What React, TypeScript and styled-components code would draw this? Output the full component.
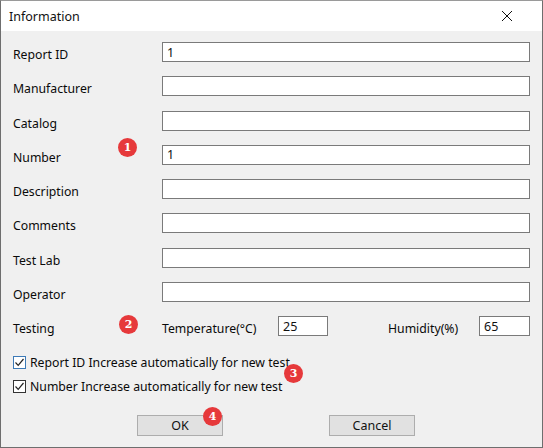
import React from "react";
import styled, { createGlobalStyle } from "styled-components";

const GlobalStyle = createGlobalStyle`
  html, body {
    margin: 0;
    padding: 0;
    background: #f0f0f0;
  }
  * {
    box-sizing: border-box;
  }
`;

const Window = styled.div`
  width: 543px;
  height: 448px;
  border: 1px solid #6e6e6e;
  border-top-color: #9a9a9a;
  background: #f0f0f0;
  display: flex;
  flex-direction: column;
  font-family: "Noto Sans", "Liberation Sans", sans-serif;
  font-size: 12.25px;
  color: #0a0a0a;
`;

const TitleBar = styled.div`
  height: 30px;
  flex-shrink: 0;
  background: #fff;
  display: flex;
  align-items: center;
  justify-content: space-between;
  padding: 0 29px 0 8px;
`;

const Title = styled.span`
  font-size: 12.5px;
  color: #111;
`;

const CloseButton = styled.button`
  width: 12px;
  height: 12px;
  padding: 0;
  border: none;
  background: none;
  display: flex;
  align-items: center;
  justify-content: center;
`;

const Body = styled.div`
  position: relative;
  flex: 1;
  padding: 11px 12px 0 12px;
`;

const FormGrid = styled.div`
  display: grid;
  grid-template-columns: 149px 368px;
  row-gap: 14.3px;
  align-items: center;
`;

/* captions sit a few pixels below the centre line of their boxes */
const Label = styled.label`
  margin-top: 5px;
  line-height: 15px;
  white-space: nowrap;
`;

const TextBox = styled.input<{ $w?: number }>`
  width: ${(p) => (p.$w ? `${p.$w}px` : "100%")};
  height: 20px;
  border: 1px solid #7a7a7a;
  background: #fff;
  padding: 0 4px;
  font-family: inherit;
  font-size: 12.5px;
  color: #111;
  outline: none;
`;

const ConditionRow = styled.div`
  display: flex;
  align-items: center;
  height: 20px;
`;

const ConditionLabel = styled.span<{ $w: number; $push?: boolean }>`
  width: ${(p) => p.$w}px;
  margin-left: ${(p) => (p.$push ? "auto" : "0")};
  margin-top: 5px;
  line-height: 15px;
  white-space: nowrap;
`;

const Options = styled.div`
  display: flex;
  flex-direction: column;
  gap: 11px;
  margin-top: 20px;
`;

const Option = styled.label`
  display: flex;
  align-items: center;
  gap: 4px;
  height: 13px;
  white-space: nowrap;
`;

const Box = styled.span<{ $focused?: boolean }>`
  width: 13px;
  height: 13px;
  flex-shrink: 0;
  border: 1px solid ${(p) => (p.$focused ? "#3d7ab7" : "#333")};
  background: #fff;
  display: flex;
  align-items: center;
  justify-content: center;
`;

const Buttons = styled.div`
  display: flex;
  gap: 106px;
  margin-top: 22px;
  padding-left: 124px;
`;

const PushButton = styled.button`
  width: 86px;
  height: 21px;
  border: 1px solid #adadad;
  background: #e1e1e1;
  font-family: inherit;
  font-size: 12.5px;
  color: #111;
  padding: 0;
`;

const Badge = styled.span<{ $x: number; $y: number }>`
  position: absolute;
  left: ${(p) => p.$x}px;
  top: ${(p) => p.$y}px;
  width: 19px;
  height: 19px;
  border-radius: 50%;
  background: #e6393b;
  color: #fff;
  font-family: "DejaVu Serif", "Liberation Serif", serif;
  font-weight: bold;
  font-size: 11px;
  display: flex;
  align-items: center;
  justify-content: center;
`;

const fields = [
  { label: "Report ID", value: "1" },
  { label: "Manufacturer", value: "" },
  { label: "Catalog", value: "" },
  { label: "Number", value: "1" },
  { label: "Description", value: "" },
  { label: "Comments", value: "" },
  { label: "Test Lab", value: "" },
  { label: "Operator", value: "" },
];

const Check = () => (
  <svg width="11" height="11" viewBox="0 0 11 11">
    <path d="M1.5 5.5 L4.2 8.3 L9.5 2" fill="none" stroke="#222" strokeWidth="1.2" />
  </svg>
);

const App: React.FC = () => {
  return (
    <>
      <GlobalStyle />
      <Window>
        <TitleBar>
          <Title>Information</Title>
          <CloseButton aria-label="Close">
            <svg width="12" height="12" viewBox="0 0 12 12">
              <path d="M1 1 L11 11 M11 1 L1 11" stroke="#111" strokeWidth="1" />
            </svg>
          </CloseButton>
        </TitleBar>
        <Body>
          <FormGrid>
            {fields.map((f) => (
              <React.Fragment key={f.label}>
                <Label>{f.label}</Label>
                <TextBox defaultValue={f.value} />
              </React.Fragment>
            ))}
            <Label>Testing</Label>
            <ConditionRow>
              <ConditionLabel $w={116}>Temperature(°C)</ConditionLabel>
              <TextBox $w={50} defaultValue="25" />
              <ConditionLabel $w={91} $push>
                Humidity(%)
              </ConditionLabel>
              <TextBox $w={51} defaultValue="65" />
            </ConditionRow>
          </FormGrid>
          <Options>
            <Option>
              <Box $focused>
                <Check />
              </Box>
              Report ID Increase automatically for new test
            </Option>
            <Option>
              <Box>
                <Check />
              </Box>
              Number Increase automatically for new test
            </Option>
          </Options>
          <Buttons>
            <PushButton>OK</PushButton>
            <PushButton>Cancel</PushButton>
          </Buttons>
          <Badge $x={117} $y={107}>1</Badge>
          <Badge $x={118} $y={284}>2</Badge>
          <Badge $x={283} $y={333}>3</Badge>
          <Badge $x={202} $y={376}>4</Badge>
        </Body>
      </Window>
    </>
  );
};

export default App;
